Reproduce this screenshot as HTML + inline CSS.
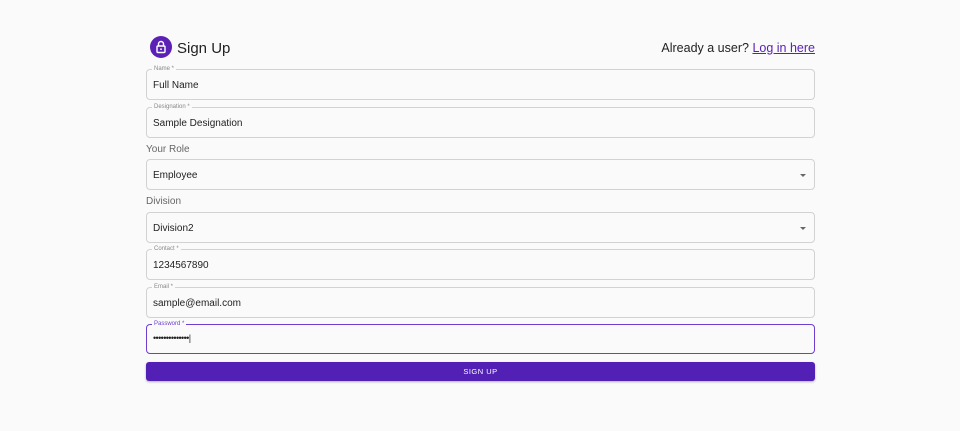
<!DOCTYPE html><html><head><style>
body{margin:0;width:960px;height:431px;background:#fafafa;font-family:"Liberation Sans",sans-serif;position:relative;overflow:hidden}
.a{position:absolute}
.f{position:absolute;left:146px;width:667px;height:29px;border:1px solid #d2d2d2;border-radius:4px;background:#fafafa}
.f .l{position:absolute;left:5px;top:-5px;font-size:6px;color:#888;background:#fafafa;padding:0 2px;line-height:8px}
.f .v{position:absolute;left:6px;top:10px;font-size:10px;color:#222}
.lab{position:absolute;left:146px;font-size:10px;color:#666}
.arr{position:absolute;right:8px;top:14px;width:0;height:0;border-left:3px solid transparent;border-right:3px solid transparent;border-top:3px solid #666}
</style></head><body>
<div class="a" style="left:150px;top:36px;width:22px;height:22px;border-radius:50%;background:#5b21b6">
<svg width="22" height="22" viewBox="0 0 22 22"><rect x="7" y="10" width="8" height="6.5" rx="1" fill="none" stroke="#fff" stroke-width="1.4"/><path d="M8.5 10V8a2.5 2.5 0 0 1 5 0v2" fill="none" stroke="#fff" stroke-width="1.4"/><circle cx="11" cy="13.2" r="0.9" fill="#fff"/></svg></div>
<div class="a" style="left:177px;top:40px;font-size:15px;color:#222">Sign Up</div>
<div class="a" style="right:145px;top:41px;font-size:12.5px;color:#222">Already a user? <span style="color:#5b21b6;text-decoration:underline">Log in here</span></div>
<div class="f" style="top:69px"><span class="l">Name *</span><span class="v">Full Name</span></div>
<div class="f" style="top:107px"><span class="l">Designation *</span><span class="v">Sample Designation</span></div>
<div class="lab" style="top:144px">Your Role</div>
<div class="f" style="top:159px"><span class="v">Employee</span><span class="arr"></span></div>
<div class="lab" style="top:196px">Division</div>
<div class="f" style="top:212px"><span class="v">Division2</span><span class="arr"></span></div>
<div class="f" style="top:249px"><span class="l">Contact *</span><span class="v">1234567890</span></div>
<div class="f" style="top:287px"><span class="l">Email *</span><span class="v">sample@email.com</span></div>
<div class="f" style="top:324px;border:1.5px solid #6d3fd0;height:28px"><span class="l" style="color:#6d3fd0">Password *</span><span class="v" style="top:8px;font-size:9px;letter-spacing:-0.6px">••••••••••••••|</span></div>
<div class="a" style="left:146px;top:362px;width:669px;height:19px;background:#5220b5;border-radius:3px;box-shadow:0 1px 2px rgba(0,0,0,.3);color:#fff;font-size:7.5px;text-align:center;line-height:19px;letter-spacing:.5px">SIGN UP</div>
</body></html>
